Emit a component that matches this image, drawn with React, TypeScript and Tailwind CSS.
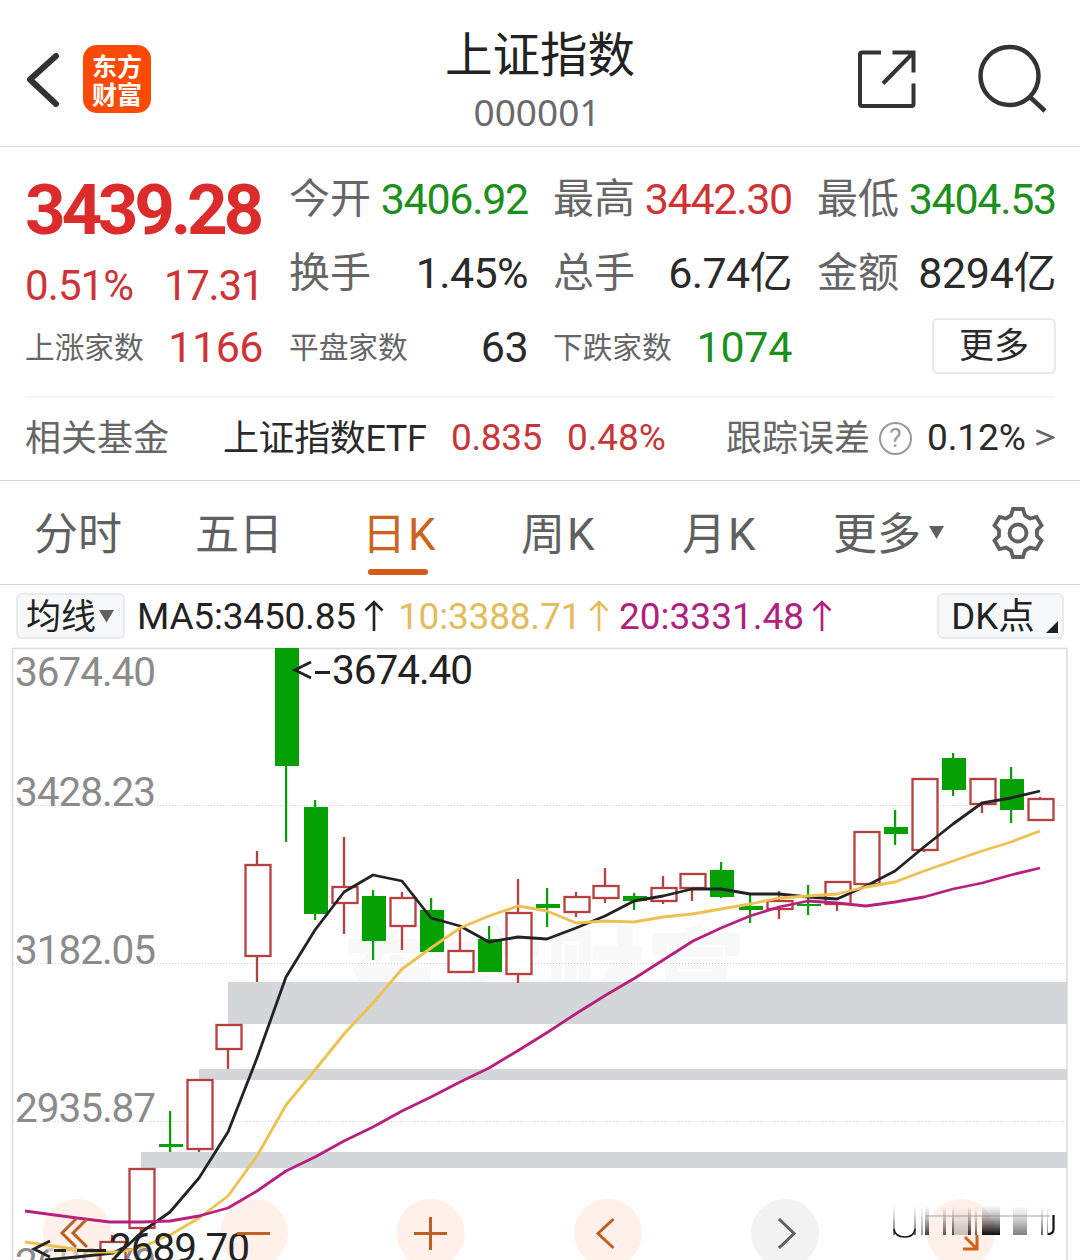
import React from "react";

type Candle = [cx: number, high: number, top: number, bottom: number, low: number, up: 0 | 1];

const candles: Candle[] = [
  [113, 1235, 1242, 1275, 1280, 1],
  [142, 1168, 1169, 1228, 1235, 1],
  [171, 1111, 1144, 1147, 1152, 0],
  [200, 1079, 1080, 1149, 1152, 1],
  [229, 1024, 1025, 1049, 1069, 1],
  [258, 851, 865, 956, 982, 1],
  [287, 648, 648, 766, 842, 0],
  [316, 800, 807, 914, 920, 0],
  [345, 837, 887, 903, 934, 1],
  [374, 890, 896, 941, 960, 0],
  [403, 892, 898, 926, 950, 1],
  [432, 898, 910, 952, 952, 0],
  [461, 928, 951, 972, 972, 1],
  [490, 926, 939, 972, 972, 0],
  [519, 879, 913, 974, 983, 1],
  [548, 888, 904, 908, 927, 0],
  [577, 892, 897, 912, 917, 1],
  [606, 868, 886, 898, 903, 1],
  [635, 893, 896, 901, 910, 0],
  [664, 876, 888, 901, 904, 1],
  [693, 873, 874, 888, 901, 1],
  [722, 862, 870, 897, 898, 0],
  [751, 895, 906, 910, 923, 0],
  [780, 891, 901, 909, 919, 1],
  [809, 885, 904, 906, 915, 0],
  [838, 881, 882, 904, 911, 1],
  [867, 832, 832, 884, 885, 1],
  [896, 810, 827, 834, 845, 0],
  [925, 778, 779, 850, 852, 1],
  [954, 753, 758, 790, 796, 0],
  [983, 778, 779, 804, 813, 1],
  [1012, 767, 779, 810, 823, 0],
  [1041, 797, 799, 820, 820, 1],
];

const ma5 =
  "45,1260 77,1257 113,1253 127,1246 143,1231 170,1212 199,1178 228,1132 257,1058 286,977 315,930 344,892 373,875 402,881 431,918 460,926 489,942 518,937 547,939 576,928 605,916 634,901 663,896 692,889 721,889 750,894 779,894 808,897 837,899 866,886 895,871 924,847 953,824 982,803 1011,798 1040,791";
const ma10 =
  "25,1242 60,1247 95,1252 120,1252 142,1247 170,1235 199,1218 228,1196 257,1156 286,1105 315,1070 344,1034 373,1003 402,969 431,948 460,928 489,916 518,906 547,911 576,923 605,921 634,922 663,917 692,914 721,909 750,904 779,898 808,896 837,894 866,887 895,882 924,871 953,861 982,851 1011,842 1040,831";
const ma20 =
  "25,1211 77,1218 110,1222 142,1222 170,1221 199,1216 228,1208 257,1191 286,1171 315,1157 344,1141 373,1127 402,1111 431,1097 460,1082 489,1068 519,1050 548,1032 577,1013 606,995 635,978 664,959.5 693,941 721,928 750,916 779,907 808,901 837,903 866,906 895,902 924,897 953,889 982,883 1011,875 1040,868";

const axis: [string, number][] = [
  ["3674.40", 686],
  ["3428.23", 806],
  ["3182.05", 964],
  ["2935.87", 1122],
  ["2689.70", 1277],
];

const smudges: [x: number, w: number, o: number][] = [
  [893, 2, 0.6],
  [914, 2, 0.6],
  [921, 2, 0.4],
  [925, 4, 0.75],
  [943, 3, 0.65],
  [952, 17, 0.22],
  [952, 2, 0.6],
  [968, 3, 0.8],
  [975, 2, 0.6],
  [982, 18, 0.95],
  [1013, 14, 0.5],
  [1041, 2, 0.6],
  [1047, 1, 0.5],
];

function Chart() {
  return (
    <svg className="block h-[614px] w-[1080px]" viewBox="0 646 1080 614" fontFamily="Roboto, 'Noto Sans CJK SC', sans-serif">
      <defs>
        <linearGradient id="smudge" x1="0" y1="0" x2="0" y2="1">
          <stop offset="0" stopColor="#000" stopOpacity="0" />
          <stop offset="0.4" stopColor="#000" stopOpacity="0.3" />
          <stop offset="1" stopColor="#000" stopOpacity="1" />
        </linearGradient>
        <filter id="soft" x="-5%" y="-20%" width="110%" height="140%">
          <feGaussianBlur stdDeviation="0.7" />
        </filter>
      </defs>
      <text x="342" y="1012" fontSize="100" fontWeight="900" fill="#f8f8f8" textLength="404" fontFamily="'Noto Sans CJK SC', sans-serif">
        东方财富
      </text>
      {[805.5, 963.5, 1121.5].map((y) => (
        <line key={y} x1="13" x2="1067" y1={y} y2={y} stroke="#d4d4d4" strokeWidth="1" strokeDasharray="1 2" />
      ))}
      <path d="M12.5 1260V648.5H1067V1260" fill="none" stroke="#dcdcdc" strokeWidth="1.5" />
      {axis.map(([label, y]) => (
        <text key={label} x="15" y={y} fontSize="40.5" fill="#8b8b8b" textLength="141">
          {label}
        </text>
      ))}
      <rect x="228" y="982" width="839" height="42" fill="#d3d7da" />
      <rect x="199" y="1069" width="868" height="11" fill="#d3d7da" />
      <rect x="141" y="1152" width="926" height="16" fill="#d3d7da" />
      {[77, 254, 430.5, 608, 961].map((cx) => (
        <circle key={cx} cx={cx} cy="1233" r="34" fill="#ffe6da" fillOpacity="0.6" />
      ))}
      <circle cx="785" cy="1233" r="34" fill="#f2f2f2" />
      {candles.map(([cx, high, top, bottom, low, up]) =>
        up ? (
          <g key={cx} stroke="#b5403f" strokeWidth="2.3">
            <path d={`M${cx - 1} ${high}V${top}M${cx - 1} ${bottom}V${low}`} />
            <rect x={cx - 12.5} y={top} width="25" height={bottom - top} fill="#fff" />
          </g>
        ) : (
          <g key={cx} fill="#04a004">
            <rect x={cx - 2} y={high} width="2.2" height={low - high} />
            <rect x={cx - 12} y={top} width="24" height={bottom - top} />
          </g>
        ),
      )}
      <g fill="none" strokeWidth="2.8" strokeLinejoin="round">
        <polyline points={ma5} stroke="#232323" />
        <polyline points={ma10} stroke="#ecc150" />
        <polyline points={ma20} stroke="#b8207f" />
      </g>
      <g fill="#222222" fontSize="40.5">
        <text x="332" y="684" textLength="141">
          3674.40
        </text>
        <text x="109" y="1262" textLength="141">
          2689.70
        </text>
      </g>
      <g fill="none" stroke="#222222" strokeWidth="2.8">
        <path d="M311 662L295 670L311 678M315 672.5H330" />
        <path d="M50 1241L34 1249L50 1257M54 1250.5H66M77 1250.5H106" />
      </g>
      <g fill="none" stroke="#bd5f22" strokeWidth="3">
        <path d="M76 1219L62 1233L76 1247M87 1219L73 1233L87 1247" />
        <path d="M237 1233.5H270" />
        <path d="M414 1233.5H447M430.500 1217V1250" />
        <path d="M613.500 1219L598 1233.500L613.500 1248" />
        <path d="M965 1237L977 1249M977 1235V1249H963" stroke="#d3611c" />
      </g>
      <path d="M779 1219L794 1233.500L779 1248" fill="none" stroke="#606060" strokeWidth="3" />
      <g filter="url(#soft)">
        {smudges.map(([x, w, o]) => (
          <rect key={`${x}-${w}`} x={x} y={1206} width={w} height={29} fill="url(#smudge)" opacity={o} />
        ))}
        <path d="M926 1216H1050" stroke="#8a8a8a" strokeWidth="1.4" opacity="0.5" />
      </g>
      <path d="M894 1229Q895 1237 905 1237Q914 1237 915 1229" fill="none" stroke="#111" strokeWidth="1.6" />
      <path d="M1053.500 1215V1229Q1053.500 1234 1048 1234" fill="none" stroke="#111" strokeWidth="2.2" />
    </svg>
  );
}

interface StatProps {
  label: string;
  value: string;
  tone: string;
  small?: boolean;
  spacing?: string;
}

function Stat({ label, value, tone, small, spacing = "tracking-[-0.600px]" }: StatProps) {
  return (
    <div className="flex h-[74px] w-[239px] items-center justify-between whitespace-nowrap">
      <span className={small ? "pt-[1px] text-[29.7px] text-[#666]" : "pt-[1px] text-[41px] text-[#666]"}>{label}</span>
      <span className={`text-[43px] ${spacing} ${tone}`}>{value}</span>
    </div>
  );
}

function UpArrow() {
  return (
    <svg className="ml-2 h-[32px] w-[20px]" viewBox="0 0 20 32" fill="none" stroke="currentColor" strokeWidth="2.6">
      <path d="M10 31V2M1.500 10.500L10 2L18.500 10.500" />
    </svg>
  );
}

export default function App() {
  return (
    <div className="flex h-[1260px] w-[1080px] flex-col overflow-hidden bg-[#fefefe] font-[Roboto,'Noto_Sans_CJK_SC',sans-serif] leading-none">
      <header className="flex h-[147px] shrink-0 justify-between border-b border-[#d6d6d6]">
        <div className="flex w-[300px] items-start pt-[45px] pl-[24px]">
          <svg className="h-[68px] w-[38px]" viewBox="24 45 38 68" fill="none" stroke="#333" strokeWidth="6" strokeLinecap="round" strokeLinejoin="round">
            <path d="M56 56L30 79.500L56 104" />
          </svg>
          <div className="ml-[21px] flex h-[68px] w-[68px] flex-col items-center justify-center rounded-[14px] bg-[#fb4a05] font-['Noto_Sans_CJK_SC',sans-serif] text-[25px] leading-[28px] font-bold text-white">
            <span>东方</span>
            <span>财富</span>
          </div>
        </div>
        <div className="flex flex-col items-center pt-[27px]">
          <h1 className="text-[47.500px] leading-[58px] text-[#222]">上证指数</h1>
          <div className="-mt-[1px] -ml-[6px] font-['Noto_Sans',sans-serif] text-[37px] leading-[56px] text-[#6a6a6a]">000001</div>
        </div>
        <div className="flex w-[300px] items-start justify-end pt-[42px] pr-[31px]">
          <svg className="h-[72px] w-[194px]" viewBox="855 42 194 72" fill="none" stroke="#333" strokeWidth="4">
            <path d="M881 52.500H862Q860 52.500 860 54.500V104Q860 106 862 106H911.500Q913.500 106 913.500 104V83.500" />
            <path d="M892.500 52.500H913.500V72.500M883 83.500L912.500 53.500" />
            <circle cx="1009.500" cy="76" r="29" strokeWidth="4.500" />
            <path d="M1030 97L1045 111" strokeWidth="4.500" />
          </svg>
        </div>
      </header>

      <section className="flex h-[249px] shrink-0 pl-[25px]">
        <div className="flex w-[238px] flex-col whitespace-nowrap text-[#dc2b2b]">
          <div className="mt-[27px] h-[71px] text-[71px] leading-[71px] font-bold tracking-[-4.300px]">3439.28</div>
          <div className="mt-[19px] flex h-[44px] items-center justify-between text-[42px] tracking-[-0.900px] text-[#cf3335]">
            <span>0.51%</span>
            <span className="tracking-[-1.300px]">17.31</span>
          </div>
          <div className="mt-[2px] flex h-[74px] items-center justify-between">
            <span className="pt-[1px] text-[29.700px] text-[#666]">上涨家数</span>
            <span className="text-[43px] tracking-[-0.500px] text-[#cf3335]">1166</span>
          </div>
        </div>
        <div className="ml-[26px] grid grid-cols-[264px_264px_239px] content-start pt-[15px]">
          <Stat label="今开" value="3406.92" tone="text-[#1c8f1c]" spacing="tracking-[-1.300px]" />
          <Stat label="最高" value="3442.30" tone="text-[#cf3335]" spacing="tracking-[-1.300px]" />
          <Stat label="最低" value="3404.53" tone="text-[#1c8f1c]" spacing="tracking-[-1.300px]" />
          <Stat label="换手" value="1.45%" tone="text-[#2a2a2a]" />
          <Stat label="总手" value="6.74亿" tone="text-[#2a2a2a]" />
          <Stat label="金额" value="8294亿" tone="text-[#2a2a2a]" spacing="tracking-[-0.400px]" />
          <Stat label="平盘家数" value="63" tone="text-[#2a2a2a]" small />
          <Stat label="下跌家数" value="1074" tone="text-[#1c8f1c]" spacing="tracking-[-0.300px]" small />
          <div className="flex items-center justify-end">
            <button className="-mt-[2px] flex h-[56px] w-[124px] items-center justify-center rounded-md border-2 border-[#e9e9e9] text-[35px] text-[#2a2a2a]">更多</button>
          </div>
        </div>
      </section>

      <section className="mx-[25px] flex h-[84px] shrink-0 items-center border-t-2 border-[#f4f4f4] text-[36px] whitespace-nowrap text-[#2a2a2a]">
        <span className="w-[198px] text-[#666]">相关基金</span>
        <span className="w-[228px] tracking-[-0.400px]">上证指数ETF</span>
        <span className="mb-[4px] w-[116px] text-[37px] tracking-[-0.400px] text-[#c93638]">0.835</span>
        <span className="mb-[4px] w-[159px] text-[37px] tracking-[-0.100px] text-[#c93638]">0.48%</span>
        <span className="w-[144px] text-[#666]">跟踪误差</span>
        <span className="mb-[2px] ml-[9px] flex h-[33px] w-[33px] items-center justify-center rounded-full border-[2.500px] border-[#999] text-[26px] text-[#999]">?</span>
        <span className="mb-[4px] ml-[15px] w-[108px] text-[37px] tracking-[-0.100px]">0.12%</span>
        <svg className="mb-[3px] h-[20px] w-[20px]" viewBox="0 0 20 20" fill="none" stroke="#666" strokeWidth="2.600">
          <path d="M1.500 2.500L18 9.500L1.500 16.500" />
        </svg>
      </section>

      <nav className="flex h-[105px] shrink-0 items-center border-y border-[#d6d6d6] pl-[34px] text-[44px] whitespace-nowrap text-[#606060]">
        <span className="w-[161px] pt-[4px]">分时</span>
        <span className="w-[167px] pt-[4px]">五日</span>
        <span className="relative w-[159px] pt-[4px] text-[#cc6420]">
          日<span className="ml-[2px]">K</span>
          <i className="absolute top-[60px] left-[6px] h-[6px] w-[60px] rounded-full bg-[#d35a17]" />
        </span>
        <span className="w-[161px] pt-[4px]">
          周<span className="ml-[2px]">K</span>
        </span>
        <span className="w-[151px] pt-[4px]">
          月<span className="ml-[2px]">K</span>
        </span>
        <span className="w-[96px] pt-[4px]">更多</span>
        <svg className="h-[13px] w-[15px]" viewBox="0 0 15 13" fill="#606060">
          <path d="M0 0H15L7.500 13Z" />
        </svg>
        <svg className="ml-[48px] h-[54px] w-[52px]" viewBox="-26 -27 52 54" fill="none" stroke="#606060" strokeWidth="3.800">
          <path d="M-5 -24H5L7 -17.500L12 -14.500L18.500 -16L23.500 -7.500L19 -3V3L23.500 7.500L18.500 16L12 14.500L7 17.500L5 24H-5L-7 17.500L-12 14.500L-18.500 16L-23.500 7.500L-19 3V-3L-23.500 -7.500L-18.500 -16L-12 -14.500L-7 -17.500Z" />
          <circle r="8.500" />
        </svg>
      </nav>

      <div className="flex h-[61px] shrink-0 items-center pt-[1px] pl-[16px] text-[37px] whitespace-nowrap text-[#222]">
        <button className="flex h-[46px] w-[109px] items-center rounded-md border-2 border-[#e8eaec] bg-[#f7f8fa] pl-[8px] text-[35px]">
          <span className="pt-[2px]">均线</span>
          <svg className="ml-[3px] h-[13px] w-[15px]" viewBox="0 0 15 13" fill="#606060">
            <path d="M0 0H15L7.500 12.500Z" />
          </svg>
        </button>
        <span className="ml-[12px] flex w-[261px] items-center tracking-[-0.200px]">
          MA5:3450.85
          <UpArrow />
        </span>
        <span className="flex w-[221px] items-center tracking-[-0.200px] text-[#e3bd5c]">
          10:3388.71
          <UpArrow />
        </span>
        <span className="flex w-[318px] items-center text-[#b0207c]">
          20:3331.48
          <UpArrow />
        </span>
        <button className="flex h-[46px] w-[127px] items-end rounded-md border-2 border-[#e8eaec] bg-[#f7f8fa] pl-[11px] text-[36.500px]">
          <span className="w-[86px] leading-[40px]">DK点</span>
          <svg className="mb-[4px] ml-[10px] h-[12px] w-[12px]" viewBox="0 0 12 12" fill="#222">
            <path d="M12 0V12H0Z" />
          </svg>
        </button>
      </div>

      <Chart />
    </div>
  );
}
